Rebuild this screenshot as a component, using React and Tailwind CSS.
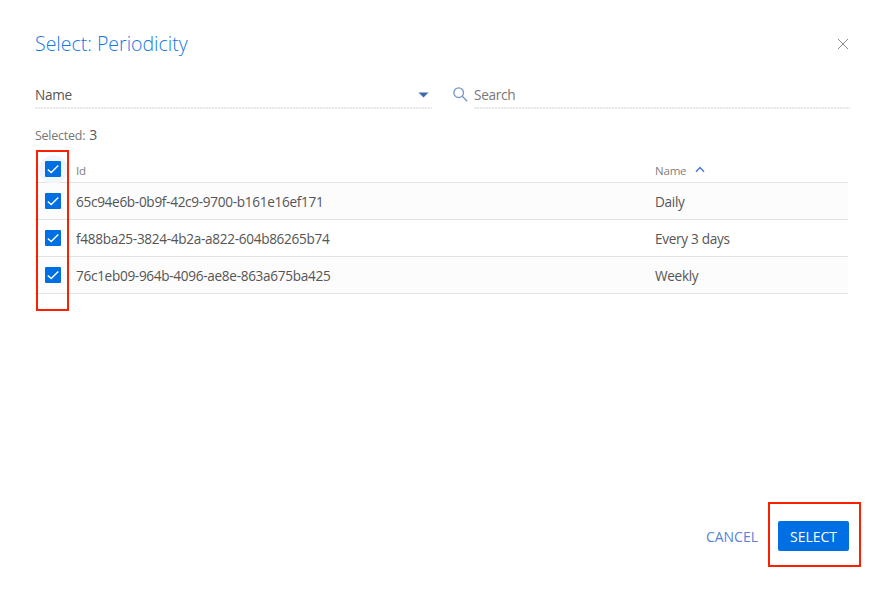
import React from "react";

const rows = [
  { id: "65c94e6b-0b9f-42c9-9700-b161e16ef171", name: "Daily" },
  { id: "f488ba25-3824-4b2a-a822-604b86265b74", name: "Every 3 days" },
  { id: "76c1eb09-964b-4096-ae8e-863a675ba425", name: "Weekly" },
];

function Checkbox() {
  return (
    <span className="flex size-4 shrink-0 items-center justify-center rounded-[1px] bg-[#006fe3]">
      <svg width="16" height="16" viewBox="0 0 16 16" fill="none" stroke="#fff" strokeWidth="1.4">
        <path d="M2.8 8.4 6.2 11.6 13.3 4.6" />
      </svg>
    </span>
  );
}

function DottedLine() {
  return <div className="h-[2px] shrink-0 bg-[repeating-linear-gradient(90deg,#eaeaea_0_2px,#f8f8f8_2px_3px)]" />;
}

export default function App() {
  return (
    <div className="relative flex h-[597px] w-[885px] flex-col overflow-hidden bg-white pr-[35px] pl-[35px] font-['Open_Sans','Noto_Sans',sans-serif] text-[13.6px] tracking-[-0.31px] text-[#555]">
      <header className="flex h-[67px] shrink-0 items-center justify-between pt-[21px] pr-[1px]">
        <h1 className="text-[19.5px] leading-6 font-light tracking-normal text-[#1478e4]">Select: Periodicity</h1>
        <svg width="12" height="12" viewBox="0 0 12 12" stroke="#8c8c8c" strokeWidth="1">
          <path d="M1 1 11 11M11 1 1 11" />
        </svg>
      </header>

      <div className="mt-[13px] flex h-[29px] shrink-0">
        <div className="flex w-[397px] flex-col">
          <div className="flex h-[27px] items-center justify-between pt-[3px] pr-[3px]">
            <span>Name</span>
            <svg width="11" height="6" viewBox="0 0 11 6" fill="#4068ac">
              <path d="M.5.5h10L5.5 5.5Z" />
            </svg>
          </div>
          <DottedLine />
        </div>
        <svg className="mt-[7px] ml-[21px] shrink-0" width="15" height="15" viewBox="0 0 15 15" fill="none" stroke="#7895c4" strokeWidth="1.3">
          <circle cx="5.7" cy="5.7" r="4.8" />
          <path d="m9.3 9.3 4.9 4.9" />
        </svg>
        <div className="ml-[6px] flex grow flex-col">
          <div className="flex h-[27px] items-center pt-[3px] text-[#777]">Search</div>
          <DottedLine />
        </div>
      </div>

      <div className="mt-[16px] flex h-5 shrink-0 items-baseline gap-1">
        <span className="text-[12.4px] tracking-[-0.2px] text-[#777]">Selected:</span>
        <span className="text-[14px] leading-5">3</span>
      </div>

      <div className="mt-1 mr-[2px] flex flex-col">
        <div className="flex h-[34px] items-center border-b border-[#e3e3e3] text-[11.5px] tracking-[-0.2px] text-[#808080]">
          <div className="flex w-[41px] justify-center pr-[5px]">
            <span className="mt-[7px] flex size-[29px] shrink-0 items-center justify-center rounded-full bg-[#f1f6fd]">
              <Checkbox />
            </span>
          </div>
          <span className="w-[579px] pt-[11px]">Id</span>
          <span className="pt-[11px]">Name</span>
          <svg className="mt-[7px] ml-[9px]" width="10" height="7" viewBox="0 0 10 7" fill="none" stroke="#4a78d8" strokeWidth="1.5">
            <path d="M1 5.8 5 1.5 9 5.8" />
          </svg>
        </div>
        {rows.map((row) => (
          <div key={row.id} className="flex h-[37px] items-center border-b border-[#e3e3e3] odd:bg-white even:bg-[#fcfcfc]">
            <div className="flex w-[41px] pl-[10px]">
              <Checkbox />
            </div>
            <span className="w-[579px] pt-[2px]">{row.id}</span>
            <span className="pt-[2px]">{row.name}</span>
          </div>
        ))}
      </div>

      <footer className="mt-auto mr-[1px] mb-[46px] flex h-[30px] shrink-0 items-center justify-end gap-5">
        <button className="pt-[1px] text-[14px] tracking-normal text-[#5a82d8]">CANCEL</button>
        <button className="h-[30px] w-[71px] rounded-[2px] bg-[#006fe3] pt-[1px] text-[14px] tracking-normal text-white">SELECT</button>
      </footer>

      <div className="pointer-events-none absolute top-[150px] left-[36px] h-[161px] w-[33px] border-2 border-[#fc2003]" />
      <div className="pointer-events-none absolute top-[502px] left-[768px] h-[65px] w-[93px] border-2 border-[#fc2003]" />
    </div>
  );
}
